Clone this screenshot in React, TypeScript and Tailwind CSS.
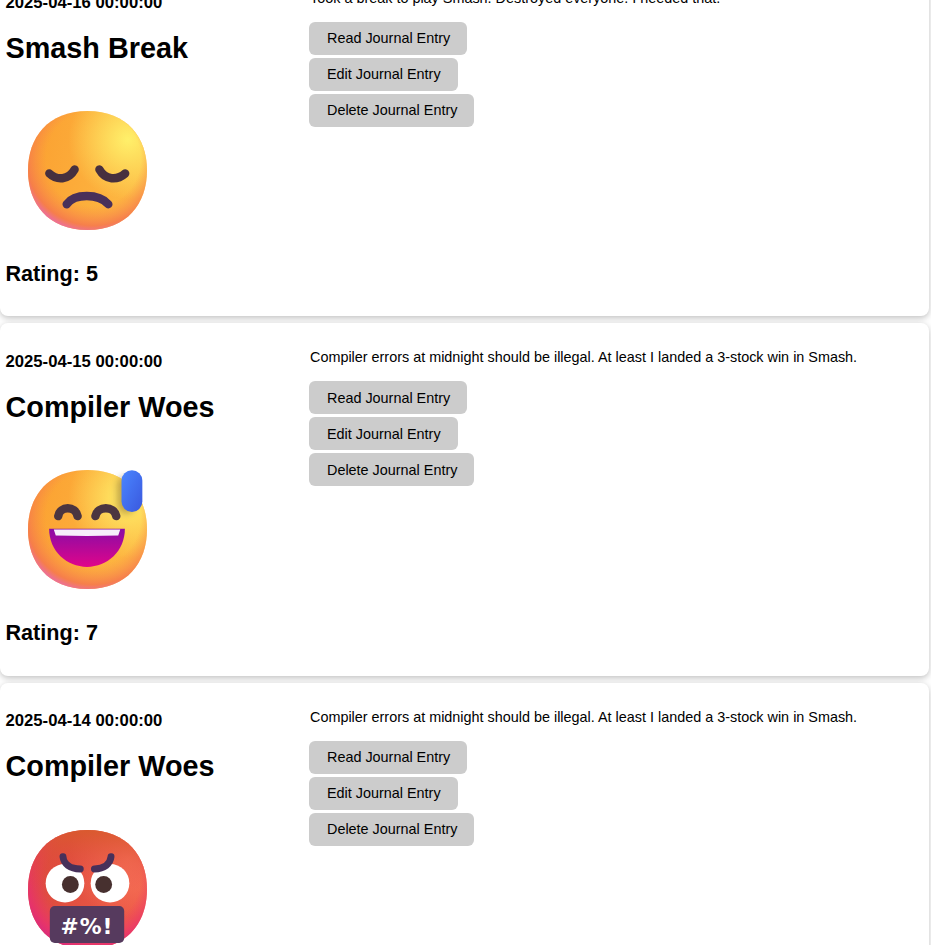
import type { ReactNode } from "react";

const FACE = "M15.9989 29.9978C25.3333 29.9978 29.9978 23.7303 29.9978 15.9989C29.9978 8.26751 25.3333 2 15.9989 2C6.66443 2 2 8.26751 2 15.9989C2 23.7303 6.66443 29.9978 15.9989 29.9978Z";

function Face({ id, red, children }: { id: string; red?: boolean; children: ReactNode }) {
  return (
    <svg width="119" height="119" viewBox="0 0 120 120" className="block">
      <defs>
        <linearGradient id={`${id}-base`} x1="0" y1="0" x2="1" y2="0.2">
          <stop offset="0" stopColor={red ? "#d8483a" : "#fb9f30"} />
          <stop offset="1" stopColor={red ? "#ee5a48" : "#fdb843"} />
        </linearGradient>
        <radialGradient id={`${id}-hi`} cx="0.84" cy="0.24" r="0.5">
          <stop offset="0" stopColor={red ? "#f8795a" : "#fff06a"} />
          <stop offset="1" stopColor={red ? "#f8795a" : "#fff06a"} stopOpacity="0" />
        </radialGradient>
        <radialGradient id={`${id}-low`} cx="0.55" cy="0.4" r="0.64">
          <stop offset="0.62" stopColor={red ? "#f03a68" : "#f98a48"} stopOpacity="0" />
          <stop offset="0.88" stopColor={red ? "#e83070" : "#f5774e"} stopOpacity="0.85" />
          <stop offset="1" stopColor={red ? "#d82a80" : "#e86ab8"} />
        </radialGradient>
        <linearGradient id={`${id}-top`} x1="0" y1="0" x2="0" y2="1">
          <stop offset="0" stopColor={red ? "#d85a2c" : "#fbb03a"} stopOpacity={red ? 0.9 : 0} />
          <stop offset="0.5" stopColor={red ? "#e8404a" : "#fbb03a"} stopOpacity="0" />
        </linearGradient>
      </defs>
      <g transform="scale(4.2857) translate(-2 -2)">
        <path d={FACE} fill={`url(#${id}-base)`} />
        <path d={FACE} fill={`url(#${id}-hi)`} />
        <path d={FACE} fill={`url(#${id}-low)`} />
        <path d={FACE} fill={`url(#${id}-top)`} />
      </g>
      {children}
    </svg>
  );
}

function SadFace() {
  return (
    <Face id="sad">
      <g fill="none" stroke="#47303f" strokeWidth="8.5" strokeLinecap="round">
        <path d="M21.5 63 C29 70 41 70 47 59" />
        <path d="M72 59 C78 70 90 70 98 63" />
        <path d="M39 94 C47 83 71 83 81 94" stroke="#49305a" />
      </g>
    </Face>
  );
}

function SweatFace() {
  return (
    <Face id="sweat">
      <defs>
        <linearGradient id="mouth" x1="0" y1="0" x2="0" y2="1">
          <stop offset="0" stopColor="#8a0ca6" />
          <stop offset="1" stopColor="#e0058a" />
        </linearGradient>
        <linearGradient id="drop" x1="0" y1="0" x2="1" y2="1">
          <stop offset="0" stopColor="#4a86ff" />
          <stop offset="1" stopColor="#3a58de" />
        </linearGradient>
        <filter id="dropBlur" x="-50%" y="-50%" width="200%" height="200%">
          <feGaussianBlur stdDeviation="4" />
        </filter>
      </defs>
      <rect x="90" y="6" width="18" height="38" rx="9" fill="#8a6a30" opacity="0.55" filter="url(#dropBlur)" />
      <g fill="none" stroke="#4b3540" strokeWidth="8.5" strokeLinecap="round">
        <path d="M30.5 46.5 C32 36 48 36 50 46.5" />
        <path d="M68 46.5 C70 36 87 36 89 46.5" />
      </g>
      <path d="M21.3 59.3 H97.7 C97.7 82 80 97.7 59.5 97.7 C39 97.7 21.3 82 21.3 59.3 Z" fill="url(#mouth)" />
      <path d="M26 60 H93 L91 66 Q59.5 67 28 66 Z" fill="#f6effa" />
      <rect x="94.3" y="0.3" width="21" height="42" rx="10.5" fill="url(#drop)" />
    </Face>
  );
}

function SwearFace() {
  return (
    <Face id="swear" red>
      <circle cx="37.3" cy="53.7" r="19.5" fill="#ffffff" />
      <circle cx="82.7" cy="53.7" r="19.5" fill="#ffffff" />
      <circle cx="42.7" cy="55" r="8.5" fill="#47302f" />
      <circle cx="76.3" cy="55" r="8.5" fill="#47302f" />
      <g fill="none" stroke="#47305a" strokeWidth="7" strokeLinecap="round">
        <path d="M35.3 27 C36 34 42 39 52.7 39.3" />
        <path d="M83.7 27 C83 34 77 39 67 39.3" />
      </g>
      <rect x="22" y="76.7" width="75" height="37.3" rx="5" fill="#563a5e" />
      <text x="59.5" y="105" textAnchor="middle" fontFamily="'DejaVu Sans', sans-serif" fontWeight="700" fontSize="22" letterSpacing="1" fill="#ffffff">#%!</text>
    </Face>
  );
}

const entries = [
  { date: "2025-04-16 00:00:00", title: "Smash Break", rating: 5, text: "Took a break to play Smash. Destroyed everyone. I needed that.", face: <SadFace /> },
  { date: "2025-04-15 00:00:00", title: "Compiler Woes", rating: 7, text: "Compiler errors at midnight should be illegal. At least I landed a 3-stock win in Smash.", face: <SweatFace /> },
  { date: "2025-04-14 00:00:00", title: "Compiler Woes", rating: 2, text: "Compiler errors at midnight should be illegal. At least I landed a 3-stock win in Smash.", face: <SwearFace /> },
];

function JournalButton({ label }: { label: string }) {
  return (
    <button className="block h-[33px] rounded-[6px] bg-[#cccccc] pt-[1.2px] pr-[17px] pl-[18px] text-[14.4px] text-black">
      {label}
    </button>
  );
}

export default function App() {
  return (
    <div className="h-[945px] overflow-hidden bg-white font-['Liberation_Sans',Arial,sans-serif] text-black">
      <div className="mt-[-36px] flex w-[929px] flex-col gap-[7px]">
        {entries.map((entry) => (
          <div key={entry.date} className="flex h-[352.4px] rounded-[8px] bg-white shadow-[0_2px_6px_rgba(0,0,0,0.25)]">
            <div className="w-[309px] shrink-0 pl-[5.5px] pt-[28.6px]">
              <div className="text-[16.7px] leading-[20px] font-bold">{entry.date}</div>
              <h1 className="mt-[18px] text-[28.8px] leading-[34px] font-bold">{entry.title}</h1>
              <div className="mt-[46.2px] ml-[22.5px]">{entry.face}</div>
              <h3 className="mt-[30.8px] text-[21.6px] leading-[26px] font-bold">Rating: {entry.rating}</h3>
            </div>
            <div className="pt-[26px]">
              <p className="pl-px text-[14.4px] leading-[17px]">{entry.text}</p>
              <div className="mt-[15px] flex flex-col items-start gap-[3.05px]">
                <JournalButton label="Read Journal Entry" />
                <JournalButton label="Edit Journal Entry" />
                <JournalButton label="Delete Journal Entry" />
              </div>
            </div>
          </div>
        ))}
      </div>
    </div>
  );
}
